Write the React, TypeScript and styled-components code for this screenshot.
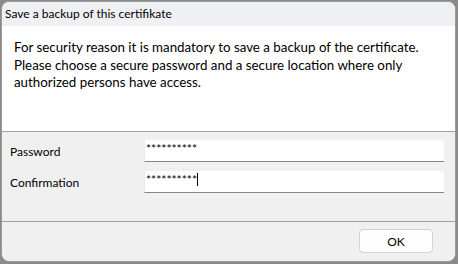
import React from 'react'
import styled, { createGlobalStyle } from 'styled-components'

const GlobalStyle = createGlobalStyle`
  html, body {
    margin: 0;
    padding: 0;
    background: #8a8a8a;
  }
  body {
    font-family: Lato, "Noto Sans", sans-serif;
    color: #000;
  }
`

const Page = styled.div`
  padding: 1px 2px 2px 1px;
  width: 458px;
  height: 264px;
  box-sizing: border-box;
`

const Window = styled.div`
  width: 455px;
  height: 261px;
  box-sizing: border-box;
  border: 1px solid #9b9b9b;
  border-radius: 8px;
  overflow: hidden;
  display: flex;
  flex-direction: column;
  background: #f0f0f0;
`

const TitleBar = styled.div`
  height: 24px;
  line-height: 24px;
  padding-left: 3px;
  background: #eff0f3;
  font-size: 12px;
  white-space: nowrap;
`

const Message = styled.div`
  height: 105px;
  box-sizing: border-box;
  padding: 13px 12px 0;
  background: #fff;
  font-size: 13.33px;
  line-height: 17.5px;
`

const FormPanel = styled.div`
  height: 91px;
  box-sizing: border-box;
  border-top: 1px solid #a0a0a0;
  border-bottom: 1px solid #a0a0a0;
  padding: 8px 11px 0 8px;
  display: grid;
  grid-template-columns: 134px 300px;
  grid-auto-rows: 22px;
  row-gap: 9px;
  align-items: center;
`

const Label = styled.label`
  font-size: 12px;
`

const Field = styled.div`
  height: 22px;
  box-sizing: border-box;
  background: #fff;
  border-radius: 3px 3px 0 0;
  border-left: 1px solid #ececec;
  border-bottom: 1px solid #868686;
  padding: 1px 0 0 1px;
  font-size: 12px;
  line-height: 15px;
  display: flex;
  align-items: flex-start;
`

const Mask = styled.span`
  letter-spacing: 0;
`

const Caret = styled.span`
  display: inline-block;
  width: 1px;
  height: 13px;
  margin-top: 1px;
  background: #000;
`

const Footer = styled.div`
  flex: 1;
  display: flex;
  justify-content: flex-end;
  align-items: flex-start;
  padding: 7px 22px 0 0;
`

const Button = styled.button`
  width: 74px;
  height: 24px;
  box-sizing: border-box;
  border: 1px solid #d2d2d2;
  border-radius: 4px;
  background: #fdfdfd;
  font-family: Lato, "Noto Sans", sans-serif;
  font-size: 12px;
  color: #000;
  padding: 0;
`

export default function App() {
  return (
    <Page>
      <GlobalStyle />
      <Window>
        <TitleBar>Save a backup of this certifikate</TitleBar>
        <Message>
          For security reason it is mandatory to save a backup of the certificate.
          <br />
          Please choose a secure password and a secure location where only
          <br />
          authorized persons have access.
        </Message>
        <FormPanel>
          <Label>Password</Label>
          <Field>
            <Mask>**********</Mask>
          </Field>
          <Label>Confirmation</Label>
          <Field>
            <Mask>**********</Mask>
            <Caret />
          </Field>
        </FormPanel>
        <Footer>
          <Button>OK</Button>
        </Footer>
      </Window>
    </Page>
  )
}
